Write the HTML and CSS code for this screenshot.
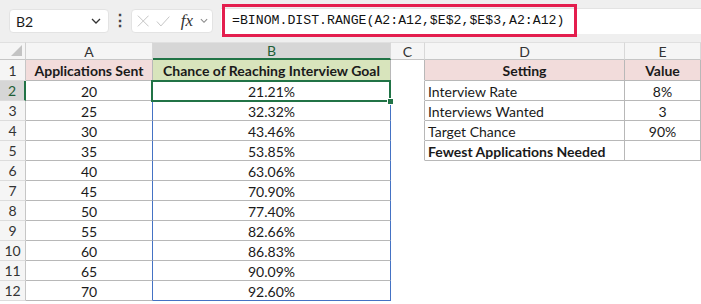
FILE: index.html
```html
<!DOCTYPE html>
<html>
<head>
    <title>Interview Odds</title>
    <link rel="stylesheet" href="styles.css">
</head>
<body>
    <div class="toolbar">
        <div class="name-box">
            <span>B2</span>
            <svg class="chev" width="10" height="6" viewBox="0 0 10 6"><path d="M1 1 L5 5 L9 1" fill="none" stroke="#333" stroke-width="1.3"/></svg>
        </div>
        <div class="dots">&#8942;</div>
        <div class="fn-box">
            <svg width="14" height="14" viewBox="0 0 14 14"><path d="M1 1 L13 13 M13 1 L1 13" stroke="#c4c4c4" stroke-width="1.1" fill="none"/></svg>
            <svg width="16" height="13" viewBox="0 0 16 13"><path d="M1 6.5 L5.5 11.5 L15 1" stroke="#c4c4c4" stroke-width="1.1" fill="none"/></svg>
            <span class="fx">fx</span>
            <svg width="9" height="6" viewBox="0 0 9 6"><path d="M1 1 L4.5 4.5 L8 1" fill="none" stroke="#888" stroke-width="1.2"/></svg>
        </div>
        <div class="formula">
            <span class="formula-text">=BINOM.DIST.RANGE(A2:A12,$E$2,$E$3,A2:A12)</span>
        </div>
    </div>

    <div class="sheet">
        <div class="corner"></div>
        <div class="ch">A</div>
        <div class="ch sel">B</div>
        <div class="ch">C</div>
        <div class="ch">D</div>
        <div class="ch">E</div>

        <div class="rh">1</div>
        <div class="c tb pink b">Applications Sent</div>
        <div class="c tb green b">Chance of Reaching Interview Goal</div>
        <div class="c edge"></div>
        <div class="c tb pink b">Setting</div>
        <div class="c tb pink b">Value</div>

        <div class="rh sel">2</div>
        <div class="c tb">20</div>
        <div class="c tb blue-r">21.21%</div>
        <div class="c edge"></div>
        <div class="c tb left">Interview Rate</div>
        <div class="c tb">8%</div>

        <div class="rh">3</div>
        <div class="c tb blue-r">25</div>
        <div class="c tb blue-r">32.32%</div>
        <div class="c edge"></div>
        <div class="c tb left">Interviews Wanted</div>
        <div class="c tb">3</div>

        <div class="rh">4</div>
        <div class="c tb blue-r">30</div>
        <div class="c tb blue-r">43.46%</div>
        <div class="c edge"></div>
        <div class="c tb left">Target Chance</div>
        <div class="c tb">90%</div>

        <div class="rh">5</div>
        <div class="c tb blue-r">35</div>
        <div class="c tb blue-r">53.85%</div>
        <div class="c edge"></div>
        <div class="c tb left b">Fewest Applications Needed</div>
        <div class="c tb"></div>

        <div class="rh">6</div>
        <div class="c tb blue-r">40</div>
        <div class="c tb blue-r">63.06%</div>
        <div class="c"></div><div class="c"></div><div class="c"></div>

        <div class="rh">7</div>
        <div class="c tb blue-r">45</div>
        <div class="c tb blue-r">70.90%</div>
        <div class="c"></div><div class="c"></div><div class="c"></div>

        <div class="rh">8</div>
        <div class="c tb blue-r">50</div>
        <div class="c tb blue-r">77.40%</div>
        <div class="c"></div><div class="c"></div><div class="c"></div>

        <div class="rh">9</div>
        <div class="c tb blue-r">55</div>
        <div class="c tb blue-r">82.66%</div>
        <div class="c"></div><div class="c"></div><div class="c"></div>

        <div class="rh">10</div>
        <div class="c tb blue-r">60</div>
        <div class="c tb blue-r">86.83%</div>
        <div class="c"></div><div class="c"></div><div class="c"></div>

        <div class="rh">11</div>
        <div class="c tb blue-r">65</div>
        <div class="c tb blue-r">90.09%</div>
        <div class="c"></div><div class="c"></div><div class="c"></div>

        <div class="rh">12</div>
        <div class="c tb blue-r">70</div>
        <div class="c tb blue-r blue-b">92.60%</div>
        <div class="c"></div><div class="c"></div><div class="c"></div>

        <div class="selection"><span class="handle"></span></div>
    </div>
</body>
</html>
```

FILE: styles.css
```css
body {
    margin: 0;
    background: #fff;
    font-family: 'Lato', 'Liberation Sans', sans-serif;
    font-size: 14px;
    color: #1a1a1a;
    overflow: hidden;
}

.toolbar {
    position: relative;
    height: 42px;
    background: #efefef;
    display: flex;
    align-items: flex-start;
}

.name-box {
    margin: 9px 0 0 9px;
    width: 100px;
    height: 24px;
    box-sizing: border-box;
    background: #fff;
    border: 1px solid #e3e3e3;
    border-radius: 4px;
    display: flex;
    align-items: center;
    justify-content: space-between;
    padding: 0 7px 0 6px;
}

.dots {
    width: 22px;
    margin-top: 10px;
    text-align: center;
    font-size: 16px;
    color: #444;
    font-weight: bold;
}

.fn-box {
    margin-top: 9px;
    width: 82px;
    height: 24px;
    box-sizing: border-box;
    background: #fff;
    border: 1px solid #e3e3e3;
    border-radius: 4px;
    display: flex;
    align-items: center;
    gap: 7px;
    padding: 0 4px 0 5px;
}

.fx {
    font-family: 'Liberation Serif', serif;
    font-style: italic;
    font-size: 17px;
    color: #333;
    margin-left: 3px;
}

.formula {
    margin: 8px 0 0 8px;
    flex: 1;
    height: 25px;
    background: #fff;
    border-top: 1px solid #e3e3e3;
    position: relative;
}

.formula-text {
    position: absolute;
    left: 1px;
    top: -5px;
    width: 355px;
    height: 33px;
    box-sizing: border-box;
    border: 3px solid #e41e4e;
    font-family: 'Liberation Mono', monospace;
    font-size: 13.2px;
    line-height: 27px;
    padding-left: 7px;
    color: #111;
}

.sheet {
    position: relative;
    display: grid;
    grid-template-columns: 26px 127px 238px 34px 200px 76px;
    grid-template-rows: 18px 21px repeat(11, 20px);
}

.corner, .ch, .rh {
    background: #f5f5f5;
    box-sizing: border-box;
    color: #333;
    display: flex;
    align-items: center;
    justify-content: center;
}

.corner {
    border-right: 1px solid #d0d0d0;
    border-bottom: 1px solid #c6c6c6;
    border-top: 1px solid #e0e0e0;
    position: relative;
}

.corner::after {
    content: '';
    position: absolute;
    right: 3px;
    bottom: 3px;
    border-left: 11px solid transparent;
    border-bottom: 11px solid #c3c3c3;
}

.ch {
    border-top: 1px solid #e0e0e0;
    border-right: 1px solid #d8d8d8;
    border-bottom: 1px solid #c6c6c6;
    font-size: 14px;
}

.ch.sel {
    background: #d6d6d6;
    color: #1e5e37;
    border-bottom: 2px solid #217346;
}

.rh {
    border-right: 1px solid #c6c6c6;
    border-bottom: 1px solid #dcdcdc;
    font-size: 14px;
}

.rh.sel {
    background: #d6d6d6;
    color: #1e5e37;
    border-right: 2px solid #217346;
}

.c {
    box-sizing: border-box;
    border-right: 1px solid transparent;
    border-bottom: 1px solid transparent;
    display: flex;
    align-items: center;
    justify-content: center;
    white-space: nowrap;
    padding-top: 1px;
}

.tb {
    border-right-color: #b8b8b8;
    border-bottom-color: #b8b8b8;
}

.edge {
    border-right-color: #b8b8b8;
}

.blue-r {
    border-right-color: #4472c4;
}

.blue-b {
    border-bottom-color: #4472c4;
}

.left {
    justify-content: flex-start;
    padding-left: 3px;
}

.b {
    font-weight: bold;
}

.pink {
    background: #f2dcdb;
}

.green {
    background: #d8e4bc;
}

.selection {
    position: absolute;
    left: 151px;
    top: 38px;
    width: 240px;
    height: 22px;
    box-sizing: border-box;
    border: 2px solid #217346;
}

.handle {
    position: absolute;
    right: -5px;
    bottom: -5px;
    width: 5px;
    height: 5px;
    background: #217346;
    border: 1px solid #fff;
}
```
